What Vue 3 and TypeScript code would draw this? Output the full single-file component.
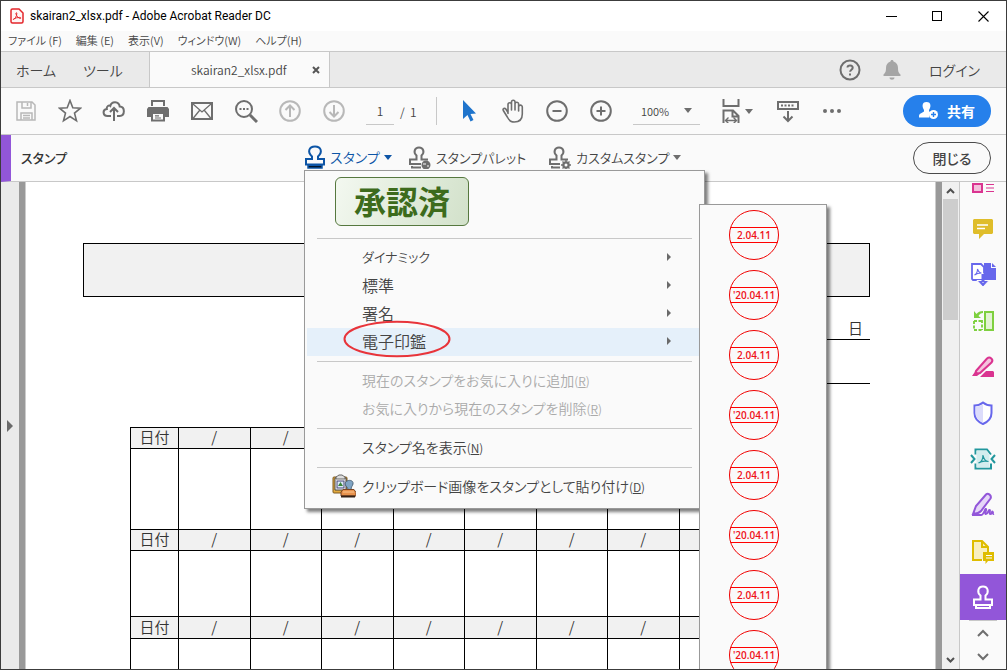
<script setup lang="ts">
import { ref } from 'vue'

const pageNumber = ref('1')
const zoomLevel = ref('100%')

interface DayBlock {
  id: string
  days: string[]
}

const menus: string[] = ['ファイル (F)', '編集 (E)', '表示(V)', 'ウィンドウ(W)', 'ヘルプ(H)']
const stampGroups: string[] = ['ダイナミック', '標準', '署名', '電子印鑑']
const activeGroup = '電子印鑑'
const dateStamps: string[] = ['2.04.11', "'20.04.11", '2.04.11', "'20.04.11", '2.04.11', "'20.04.11", '2.04.11', "'20.04.11"]
const blocks: DayBlock[] = [
  { id: 'first', days: ['/', '/', '', '', '', '', '', ''] },
  { id: 'second', days: ['/', '/', '/', '/', '/', '/', '/', ''] },
  { id: 'third', days: ['/', '/', '/', '/', '/', '/', '/', ''] },
]
</script>

<template>
  <div class="window">
    <header class="titlebar">
      <svg class="app-icon" width="14" height="16" viewBox="0 0 14 16">
        <path d="M2.500 1h6.500l4 4v8.500a1.500 1.500 0 0 1-1.500 1.500h-9A1.500 1.500 0 0 1 1 13.500v-11A1.500 1.500 0 0 1 2.500 1z" fill="#fff5f5" stroke="#e3262b" stroke-width="1.500" />
        <path d="M3.500 11.500c1.500-.5 3.300-3.500 3.300-6 0-1.300-1.200-1-.8.4.6 2.200 2.200 4 4 4.500 1.400.2 1.200-1-.4-1-2 0-4.300.6-5.800 1.400-.7.500-.7.900-.3.700z" fill="none" stroke="#e3262b" />
      </svg>
      <h1>skairan2_xlsx.pdf - Adobe Acrobat Reader DC</h1>
      <div class="window-buttons">
        <button aria-label="最小化"><svg width="11" height="11"><path d="M0 5.500h11" stroke="#000" /></svg></button>
        <button aria-label="最大化"><svg width="11" height="11"><rect x=".5" y=".5" width="9" height="9" fill="none" stroke="#000" /></svg></button>
        <button aria-label="ウィンドウを閉じる"><svg width="11" height="11"><path d="M.5.5l10 10M10.500.5l-10 10" stroke="#000" stroke-width="1.100" /></svg></button>
      </div>
    </header>

    <nav class="menubar">
      <button v-for="m in menus" :key="m">{{ m }}</button>
    </nav>

    <div class="tabs">
      <button class="tab home">ホーム</button>
      <button class="tab tools">ツール</button>
      <div class="tab document">
        <span class="file-name">skairan2_xlsx.pdf</span>
        <button class="tab-close" aria-label="タブを閉じる"><svg width="8" height="8"><path d="M1 1l6 6M7 1L1 7" stroke="#555" stroke-width="2" /></svg></button>
      </div>
      <div class="account">
        <button aria-label="ヘルプを開く">
          <svg width="22" height="22" viewBox="0 0 22 22" fill="none" stroke="#6e6e6e" stroke-width="2"><circle cx="11" cy="11" r="9.500" /><path d="M8.500 8.500c0-3 5.200-2.700 5.200.2 0 2-2.600 2-2.600 4.100M11 14.500v2" /></svg>
        </button>
        <button aria-label="通知">
          <svg width="18" height="20" viewBox="0 0 18 20" fill="#a5a5a5"><path d="M9 0c1 0 1.500.6 1.500 1.500C13.600 2.300 15 5 15 8c0 4 1 5 2.500 6.500V16H.5v-1.500C2 13 3 12 3 8c0-3 1.400-5.700 4.500-6.500C7.500.6 8 0 9 0zM6.500 17.500h5c0 3-5 3-5 0z" /></svg>
        </button>
        <button class="login">ログイン</button>
      </div>
    </div>

    <div class="toolbar">
      <button class="icon off" aria-label="保存"><svg viewBox="0 0 24 24"><path d="M3 3h15l3 3v15H3zM8 3v6h9V3M13.500 4v3M7 21v-7h11v7M9 16.500h7M9 19h7" stroke-width="1.500" /></svg></button>
      <button class="icon" aria-label="お気に入り"><svg viewBox="0 0 24 24"><path d="M12 1.500l2.800 7.300 7.700.4-6 4.900 2 7.700-6.500-4.300-6.500 4.300 2-7.700-6-4.900 7.700-.4z" stroke-width="1.600" /></svg></button>
      <button class="icon" aria-label="アップロード"><svg viewBox="0 0 24 24"><path d="M9 17H5.500C.5 17 .3 10.500 4.800 10 4.300 7 7 6 8.300 7 9.500 1.800 17 2 17.700 7.500c5.600.3 5.500 9.200 0 9.500H15M12 22V9.500M8 13l4-4 4 4" /></svg></button>
      <button class="icon" aria-label="印刷"><svg viewBox="0 0 24 24"><path d="M5 1h14v6H5zM2.500 8h19l1.500 2v8h-4v-4H5v4H1v-8z" class="solid" /><path d="M7 3h10v4.500H7z" fill="#fafafa" stroke="none" /><path d="M6 14h12v7.500H6z" fill="#fafafa" /><path d="M9 16.800h4M9 19h6" stroke-width="1.200" /></svg></button>
      <button class="icon" aria-label="メール"><svg viewBox="0 0 24 24"><path d="M2 4h20v16H2z" /><path d="M3 5l9 8 9-8M3 19.500l6.500-8M21 19.500l-6.500-8" stroke-width="1.300" /></svg></button>
      <button class="icon" aria-label="検索"><svg viewBox="0 0 24 24"><circle cx="10" cy="10" r="8" /><path d="M16 16l7 7" stroke-width="3" /><path d="M5.500 10h2M9 10h2M12.500 10h2" stroke-width="1.800" /></svg></button>
      <button class="icon off" aria-label="前のページ"><svg viewBox="0 0 24 24"><circle cx="12" cy="12" r="9.800" /><path d="M12 18V7M7.500 11L12 6.500l4.500 4.500" /></svg></button>
      <button class="icon off" aria-label="次のページ"><svg viewBox="0 0 24 24"><circle cx="12" cy="12" r="9.800" /><path d="M12 6v11M7.500 13l4.500 4.500 4.500-4.500" /></svg></button>
      <input v-model="pageNumber" class="page-input" aria-label="ページ番号" />
      <span class="page-total">/&nbsp; 1</span>
      <span class="divider"></span>
      <button class="icon" aria-label="選択"><svg viewBox="0 0 24 24"><path d="M6 1v19l4.500-4 3 6.500 3-1.500-3-6 5.500-.5z" fill="#1f74cc" stroke="none" /></svg></button>
      <button class="icon" aria-label="手のひら"><svg viewBox="0 0 24 24" stroke-linecap="round" stroke-linejoin="round"><path d="M7 14.500V5.500a1.500 1.500 0 0 1 3.500 0V11M10.500 10V3a1.600 1.600 0 0 1 3.500 0v8M14 5a1.600 1.600 0 0 1 3.600 0v7M17.600 8a1.600 1.600 0 0 1 3.700 0v7c0 5-3 8-8 8-4 0-5.500-2-7-5l-4-6.500c-1-2 1.500-2.800 2.500-1.500L7 13.500" stroke-width="1.600" /></svg></button>
      <button class="icon" aria-label="縮小"><svg viewBox="0 0 24 24"><circle cx="12" cy="12" r="9.800" /><path d="M7.500 12h9" /></svg></button>
      <button class="icon" aria-label="拡大"><svg viewBox="0 0 24 24"><circle cx="12" cy="12" r="9.800" /><path d="M7.500 12h9M12 7.500v9" /></svg></button>
      <label class="zoom">
        <select v-model="zoomLevel" aria-label="表示倍率"><option>100%</option><option>150%</option></select>
        <svg class="caret" width="8" height="5"><path d="M0 0h8L4 5z" /></svg>
      </label>
      <button class="icon fit" aria-label="幅に合わせる">
        <svg viewBox="0 0 24 24"><path d="M4.500 0v7h15V0M4.500 24V11.500H14l5.500 5.500v7M13.500 12v5.500H19" /><path d="M7 21.500h10M9.500 18.500l-3 3 3 3M14.500 18.500l3 3-3 3" stroke-width="1.400" /></svg>
        <svg class="caret" width="8" height="5"><path d="M0 0h8L4 5z" /></svg>
      </button>
      <button class="icon" aria-label="ツールバーを表示"><svg viewBox="0 0 24 24"><path d="M2 3h20v7H2z" /><path d="M5 6.500h14" stroke-width="1.800" stroke-dasharray="2 1.500" /><path d="M12 12v9.500M7.500 17.500L12 22l4.500-4.500" /></svg></button>
      <button class="icon" aria-label="その他"><svg viewBox="0 0 24 24"><path d="M5 10a2 2 0 1 1 0 4 2 2 0 0 1 0-4zM12 10a2 2 0 1 1 0 4 2 2 0 0 1 0-4zM19 10a2 2 0 1 1 0 4 2 2 0 0 1 0-4z" class="solid" /></svg></button>
      <button class="share">
        <svg width="20" height="18" viewBox="0 0 20 18"><path d="M7.500 0c5 0 4.500 5 2.500 8v1.500l2 1c-2 1.500-2 3.500-1.500 5H0V14c0-2.500 3-3 5-4.500V8C3 5 2.500 0 7.500 0z" fill="#fff" /><circle cx="14.500" cy="12.500" r="4.500" fill="#fff" /><path d="M12 12.500h5M14.500 10v5" stroke="#2680eb" stroke-width="1.400" /></svg>
        共有
      </button>
    </div>

    <div class="stampbar">
      <h2>スタンプ</h2>
      <button class="tool primary">
        <svg width="22" height="24" viewBox="0 0 22 24"><path d="M8 14v-2.500C3 7 5 1.500 11 1.500S19 7 14 11.500V14h6v5.500H2V14z" /><path d="M4 20.500h14V23H4z" fill="#000" stroke-width="1.500" /></svg>
        スタンプ
        <svg class="caret" width="8" height="5"><path d="M0 0h8L4 5z" /></svg>
      </button>
      <button class="tool palette">
        <svg width="24" height="24" viewBox="0 0 24 24"><path d="M20 14.500h-6.500v-4c3.500-3 2-8-2.500-8S5 7.500 8.500 10.500v4H2V19h11M4 21v1.500h9" /><circle cx="18" cy="20" r="4.500" class="solid" /><path d="M15 19h3M19 21h2" stroke="#fafafa" stroke-width="1" /></svg>
        スタンプパレット
      </button>
      <button class="tool custom">
        <svg width="24" height="24" viewBox="0 0 24 24"><path d="M20 14.500h-6.500v-4c3.500-3 2-8-2.500-8S5 7.500 8.500 10.500v4H2V19h10M4 21v1.500h8" /><circle cx="18" cy="20" r="2.500" stroke-width="2.500" /><path d="M18 15v10M13 20h10M14.500 16.500l7 7M21.500 16.500l-7 7" stroke-width="1.400" /><circle cx="18" cy="20" r="1.500" fill="#fafafa" stroke="none" /></svg>
        カスタムスタンプ
        <svg class="caret" width="8" height="5"><path d="M0 0h8L4 5z" /></svg>
      </button>
      <button class="close">閉じる</button>
    </div>

    <main class="workspace">
      <button class="expander" aria-label="ナビゲーションを開く"><svg width="6" height="12"><path d="M0 0v12l6-6z" fill="#6a6a6a" /></svg></button>
      <div class="gutter left"></div>
      <section class="page">
        <div class="banner"></div>
        <div class="day-line">日</div>
        <div class="blank-line"></div>
        <div class="table-area">
          <table>
            <colgroup><col class="label-col" /><col v-for="n in 8" :key="n" /></colgroup>
            <tbody v-for="b in blocks" :key="b.id" :class="b.id">
              <tr class="head"><th scope="row">日付</th><td v-for="(d, i) in b.days" :key="i">{{ d }}</td></tr>
              <tr class="body"><td></td><td v-for="(d, i) in b.days" :key="i"></td></tr>
            </tbody>
          </table>
        </div>
      </section>
      <div class="gutter right"></div>
      <div class="scrollbar">
        <svg width="15" height="17"><path d="M4 11l3.500-3.500L11 11" fill="none" stroke="#505050" stroke-width="2" /></svg>
        <span class="thumb"></span>
        <svg class="down" width="15" height="17"><path d="M4 6l3.500 3.500L11 6" fill="none" stroke="#505050" stroke-width="2" /></svg>
      </div>
      <aside class="sidebar">
        <div class="side-list">
          <button aria-label="整理"><svg viewBox="0 0 24 24"><rect x="2" y="13" width="9" height="8" fill="#f3c0dc" stroke="#da3490" stroke-width="2" /><path d="M15 13.500h8M15 17h8M15 20.500h8" stroke="#da3490" stroke-width="1.200" /></svg></button>
          <button aria-label="注釈"><svg viewBox="0 0 24 24"><path d="M3 2h18l1 1v13l-1 1h-8l-5 5v-5H3l-1-1V3z" fill="#dfbd2a" /><path d="M6 8h11M6 11.500h8" stroke="#fff" stroke-width="1.700" /></svg></button>
          <button aria-label="PDFを書き出し"><svg viewBox="0 0 24 24"><path d="M1 1h9l3 3v13H2L1 16z" fill="#fff" stroke="#6767ec" stroke-width="1.800" /><path d="M3.500 12c2-1 3-4 3-6 1 3 2 4 4 4-3 0-5 .5-7 2z" fill="none" stroke="#6767ec" stroke-width="1.100" /><path d="M13 0h7v5h5v12H13zM21 0l4 4h-4z" fill="#6767ec" /><path d="M12 10v10M6 17.500l6 6.500 6-6.500z" fill="#6767ec" stroke="#fafafa" stroke-width="1" /><path d="M12 11v8" stroke="#6767ec" stroke-width="3" /></svg></button>
          <button aria-label="ページを整理"><svg viewBox="0 0 24 24"><rect x="14" y="3" width="8" height="18" fill="#e2f3d3" stroke="#7ed03f" stroke-width="2" /><path d="M3 12h9M3 12v9h9M11 11v10" fill="none" stroke="#7ed03f" stroke-width="1.900" stroke-dasharray="3 1.500" /><path d="M3 2v7h7L7.500 7c1-2 2.500-3 4.500-3V2C9 2 7 3 5.500 5z" fill="#7ed03f" /></svg></button>
          <button aria-label="墨消し"><svg viewBox="0 0 24 24"><path d="M5 16L16 3.500c3-2.500 7 1 4.500 4L9 18c-3 1-5 0-4-2z" fill="#f5c2dd" stroke="#da3490" stroke-width="2" /><path d="M4.500 16l4 3-2.500 2H1zM11 20l4-4h7l1 1v5H9z" fill="#da3490" /></svg></button>
          <button aria-label="保護"><svg viewBox="0 0 24 24"><path d="M12 1.500c3 2.500 6 3 8.500 3V12c0 5-4 9-8.500 11-4.500-2-8.500-6-8.500-11V4.500c2.500 0 5.500-.5 8.500-3z" fill="#fff" stroke="#6767ec" stroke-width="2" /><path d="M12 3v19c-4-2-7.500-5-7.500-10V5.500c2.500 0 5-.5 7.500-2.500z" fill="#dcdcfb" /></svg></button>
          <button aria-label="PDFを圧縮"><svg viewBox="0 0 24 24"><path d="M4.500 7.500V2.500H16l4 5M4.500 16.500v5H20v-5" fill="none" stroke="#22979d" stroke-width="2" /><path d="M5.500 3.500h10l3 4v13h-13z" fill="#d3edee" /><path d="M0 8l3.500 4L0 16M24 8l-3.500 4 3.500 4" fill="none" stroke="#22979d" stroke-width="2" /><path d="M7.500 16c3-1 4.500-4 4.500-8 .5 4 2 6 5.500 6.500-4-1-7-.5-10 1.500z" fill="none" stroke="#22979d" stroke-width="1.200" /></svg></button>
          <button aria-label="入力と署名"><svg viewBox="0 0 24 24"><path d="M2 21l3-8L15 1.500c2-2 6 1 4.500 4L10 18c-2 2-4 3-8 3z" fill="#e6d6f8" stroke="#9256d9" stroke-width="2" /><path d="M1 22h9c3 0 4-7 5-6s-2 5 0 5 2-4 3.500-4-1 4 1 4 1-3 2-2.500 0 3 1.500 2.500" fill="none" stroke="#9256d9" stroke-width="1.900" /></svg></button>
          <button aria-label="注釈用に送信"><svg viewBox="0 0 24 24"><path d="M11 21H2V2h9l6 6v5" fill="#f8efc0" stroke="#dfbd00" stroke-width="2" /><path d="M11 2v6h6" fill="none" stroke="#dfbd00" stroke-width="2" /><path d="M12 13h11v9h-6l-2.500 3v-3H12z" fill="#dfbd00" /><path d="M15 16.500h6M15 19h6" stroke="#fff" /></svg></button>
          <button class="active" aria-label="スタンプ"><svg viewBox="0 0 24 24"><path d="M9.500 14.500v-4C6 8 6.500 1.500 12 1.500s6 6.500 2.500 9v4H21V20H3v-5.500zM5 20v3h14v-3" fill="none" stroke="#fff" stroke-width="2" /></svg></button>
        </div>
        <div class="side-nav">
          <button aria-label="上へ"><svg width="12" height="8"><path d="M1 7l5-5 5 5" fill="none" stroke="#6e6e6e" stroke-width="2" /></svg></button>
          <button aria-label="下へ"><svg width="12" height="8"><path d="M1 1l5 5 5-5" fill="none" stroke="#6e6e6e" stroke-width="2" /></svg></button>
        </div>
      </aside>
    </main>

    <div class="popup" role="menu">
      <button class="approved" role="menuitem">承認済</button>
      <hr class="first" />
      <button v-for="g in stampGroups" :key="g" class="item" :class="{ current: g === activeGroup, kana: g === 'ダイナミック' }" role="menuitem">
        {{ g }}<svg class="arrow" width="4" height="8"><path d="M0 0v8l4-4z" fill="#6a6a6a" /></svg>
      </button>
      <hr />
      <button class="item long" role="menuitem" disabled>現在のスタンプをお気に入りに追加<small>(<u>R</u>)</small></button>
      <button class="item long" role="menuitem" disabled>お気に入りから現在のスタンプを削除<small>(<u>R</u>)</small></button>
      <hr />
      <button class="item long" role="menuitem">スタンプ名を表示<small>(<u>N</u>)</small></button>
      <hr />
      <button class="item long with-icon" role="menuitem">
        <svg width="24" height="24" viewBox="0 0 24 24"><rect x="1" y="3" width="14" height="16" rx="1" fill="#e2aa3e" stroke="#7f5a20" /><path d="M3 4h11v12H3z" fill="#fff" stroke="#444" /><path d="M4 3c1-1 2-1 3-2h3c1 1 2 1 3 2v2H4z" fill="#ddd" stroke="#666" /><rect x="5" y="7" width="7" height="7" fill="#dce9f8" stroke="#447" /><path d="M6 12l2.500-4 2.500 4z" fill="#398439" /><path d="M14 12c-4-6 8-8 7-2-.4 2-2 2.500-2 6h-3c0-2-1-3-2-4z" fill="#7fa4c4" stroke="#4c6579" /><path d="M11 15.500h11l2 3v3.500H9v-4z" fill="#e8924d" stroke="#7c4421" /><path d="M9 22.500h14" stroke="#342015" stroke-width="2" /><path d="M11 18h11" stroke="#f9c590" /></svg>
        クリップボード画像をスタンプとして貼り付け<small>(<u>D</u>)</small>
      </button>
      <svg class="marker" width="110" height="40"><ellipse cx="55" cy="20" rx="52.500" ry="17.300" fill="none" stroke="#e8343a" stroke-width="2" /></svg>
    </div>

    <div class="submenu" role="menu">
      <button v-for="(s, i) in dateStamps" :key="i" role="menuitem">
        <svg width="52" height="52" viewBox="0 0 52 52"><circle cx="26" cy="26" r="24.500" fill="none" stroke="#f00000" stroke-width="1" /><path d="M2.500 18.500h47M2.500 33.500h47" stroke="#f00" /><text x="26" y="30" text-anchor="middle">{{ s }}</text></svg>
      </button>
    </div>
  </div>
</template>

<style>
body { margin: 0; overflow: hidden; }
</style>

<style scoped>
.window { position: relative; display: flex; flex-direction: column; box-sizing: border-box; height: 100vh; overflow: hidden; border: 1px solid #3c3c3c; background: #fafafa; color: #444; font-family: "Noto Sans CJK JP", sans-serif; font-size: 14px; font-weight: 350; font-feature-settings: "palt"; }
.window * { box-sizing: border-box; }
button { display: flex; align-items: center; margin: 0; padding: 0; border: 0; background: none; color: inherit; font: inherit; font-feature-settings: inherit; white-space: nowrap; }
h1, h2 { margin: 0; font-weight: 400; }
svg { flex: none; }
.caret { fill: #6e6e6e; }

.titlebar { display: flex; align-items: center; flex: 0 0 30px; padding-left: 9px; background: #fff; }
h1 { flex: 1; margin-left: 6px; color: #000; font-size: 12px; font-family: Roboto, sans-serif; }
.window-buttons { display: flex; }
.window-buttons button { justify-content: center; width: 46px; height: 30px; }

.menubar { display: flex; flex: 0 0 21px; gap: 14px; padding: 0 0 2px 7px; border-bottom: 1px solid #c8c8c8; font-size: 11px; }

.tabs { display: flex; flex: 0 0 36px; background: #eaeaea; border-bottom: 1px solid #c8c8c8; font-size: 14px; }
.home { margin-left: 15px; width: 67px; }
.tools { width: 66px; }
.document { display: flex; align-items: center; width: 181px; padding: 0 9px 0 41px; background: #fafafa; border: solid #c8c8c8; border-width: 0 1px; font-size: 12px; }
.file-name { flex: 1; }
.account { display: flex; align-items: center; margin-left: auto; padding-right: 26px; }
.account button { margin-left: 22px; }
.account .login { margin-left: 28px; }

.toolbar { display: flex; align-items: center; flex: 0 0 47px; padding: 0 15px 0 3px; border-bottom: 1px solid #c8c8c8; font-size: 12px; }
.icon { justify-content: center; width: 44px; height: 44px; color: #6e6e6e; }
.icon svg:first-child { width: 24px; height: 24px; fill: none; stroke: currentColor; stroke-width: 2; }
.off { color: #b8b8b8; }
.icon .solid, .tool .solid { fill: #6e6e6e; stroke: none; }
.page-input { width: 28px; height: 28px; margin-left: 10px; padding: 0; border: 0; border-bottom: 1px solid #c8c8c8; background: none; color: #444; font: inherit; text-align: center; }
.page-total { width: 16px; margin: 0 20px 0 6px; white-space: nowrap; }
.divider { width: 1px; height: 28px; margin-right: 10px; background: #c8c8c8; }
.zoom { display: flex; align-items: center; width: 67px; height: 28px; margin: 0 14px 0 10px; padding: 0 8px; border-bottom: 1px solid #c8c8c8; font-size: 11px; }
.zoom select { flex: 1; min-width: 0; padding: 0; border: 0; background: none; color: #444; font: inherit; appearance: none; }
.fit { gap: 2px; margin-right: 8px; }
.share { justify-content: center; gap: 8px; width: 88px; height: 32px; margin-left: auto; border-radius: 16px; background: #2680eb; color: #fff; font-size: 14px; font-weight: 700; }

.stampbar { display: flex; align-items: center; flex: 0 0 47px; padding-right: 15px; border-left: 10px solid #9256d9; border-bottom: 1px solid #c8c8c8; }
h2 { width: 293px; padding: 0 0 2px 10px; font-size: 13px; font-weight: 500; color: #333; }
.tool { gap: 4px; height: 30px; padding-bottom: 2px; font-size: 13px; }
.tool svg:first-child { fill: none; stroke: currentColor; stroke-width: 2; }
.primary { width: 104px; color: #0d55a6; font-size: 14px; }
.primary .caret { fill: #0d55a6; }
.palette { width: 140px; }
.palette svg, .custom svg:first-child { color: #6e6e6e; }
.close { justify-content: center; width: 78px; height: 32px; margin-left: auto; border: 1px solid #4b4b4b; border-radius: 16px; font-size: 14px; font-weight: 500; }

.workspace { display: flex; flex: 1; min-height: 0; }
.expander { width: 18px; padding-left: 6px; background: #eaeaea; }
.gutter { width: 7px; background: #999; }
.left { border-right: 1px solid #ccc; }
.right { border-left: 1px solid #ccc; }
.page { flex: 1; min-width: 0; height: 100%; padding: 61px 65px 0 57px; overflow: hidden; background: #fff; color: #333; }
.banner { height: 54px; border: 1px solid #000; background: #f1f1f1; }
.day-line { height: 43px; margin-left: 50%; padding: 20px 7px 0 0; border-bottom: 1px solid #000; text-align: right; font-size: 15px; line-height: 22px; }
.blank-line { height: 44px; margin-left: 50%; border-bottom: 1px solid #000; }
.table-area { margin: 43px 119px 0 47px; }
table { width: 100%; table-layout: fixed; border-collapse: collapse; }
.label-col { width: 48px; }
th, td { padding: 0 0 2px; border: 1px solid #000; text-align: center; font-size: 15px; font-weight: inherit; line-height: 18px; }
.head { height: 21px; background: #f1f1f1; }
.first .body { height: 81px; }
.second .body { height: 66px; }
.third .body { height: 66px; }
.third .head { height: 22px; }

.scrollbar { display: flex; flex-direction: column; width: 17px; padding: 0 1px; background: #f0f0f0; }
.thumb { height: 121px; background: #cdcdcd; }
.down { margin-top: auto; }

.sidebar { display: flex; flex-direction: column; width: 47px; border-left: 1px solid #c8c8c8; }
.side-list { display: flex; flex: 1; flex-direction: column; justify-content: flex-end; min-height: 0; overflow: hidden; }
.side-list button { flex: 0 0 46px; justify-content: center; }
.side-list svg { width: 24px; height: 24px; overflow: visible; }
.side-list .active { background: #9256d9; }
.side-nav { margin: 0 9px; border-top: 1px solid #c8c8c8; height: 49px; }
.side-nav button { justify-content: center; width: 28px; height: 24px; }

.popup { position: absolute; top: 169px; left: 303px; width: 401px; height: 339px; padding-top: 6px; border: 1px solid #999; background: #fafafa; box-shadow: 3px 3px 3px rgba(0, 0, 0, 0.5); }
.approved { justify-content: center; width: 134px; height: 49px; margin-left: 30px; padding-bottom: 4px; border: 1px solid #56783f; border-radius: 6px; background: linear-gradient(110deg, #f3f8f0, #d2e1ca); color: #3d6b1c; font-size: 32px; font-weight: 700; line-height: 40px; }
hr { height: 1px; margin: 5px 12px; border: 0; background: #c8c8c8; }
hr.first { margin-top: 12px; }
.item { width: 392px; height: 28px; margin-left: 2px; padding: 0 0 3px 55px; font-size: 16px; }
.kana { font-size: 13px; }
.long { font-size: 14px; }
.item:disabled { color: #aaa; }
.item small { font-size: 12px; padding-top: 2px; }
.current { background: #e5f0fa; }
.arrow { margin-left: auto; margin-right: 28px; }
.with-icon { padding-left: 25px; }
.with-icon svg { margin-right: 6px; }
.marker { position: absolute; left: 37px; top: 148px; }

.submenu { position: absolute; top: 203px; bottom: 0; left: 698px; width: 128px; padding: 4px 0 0 28px; overflow: hidden; border: 1px solid #999; border-bottom: 0; background: #fafafa; box-shadow: 3px 3px 3px rgba(0, 0, 0, 0.5); }
.submenu button { height: 60px; align-items: flex-start; }
text { fill: #f01018; font: 600 10px "Open Sans", sans-serif; }
</style>
